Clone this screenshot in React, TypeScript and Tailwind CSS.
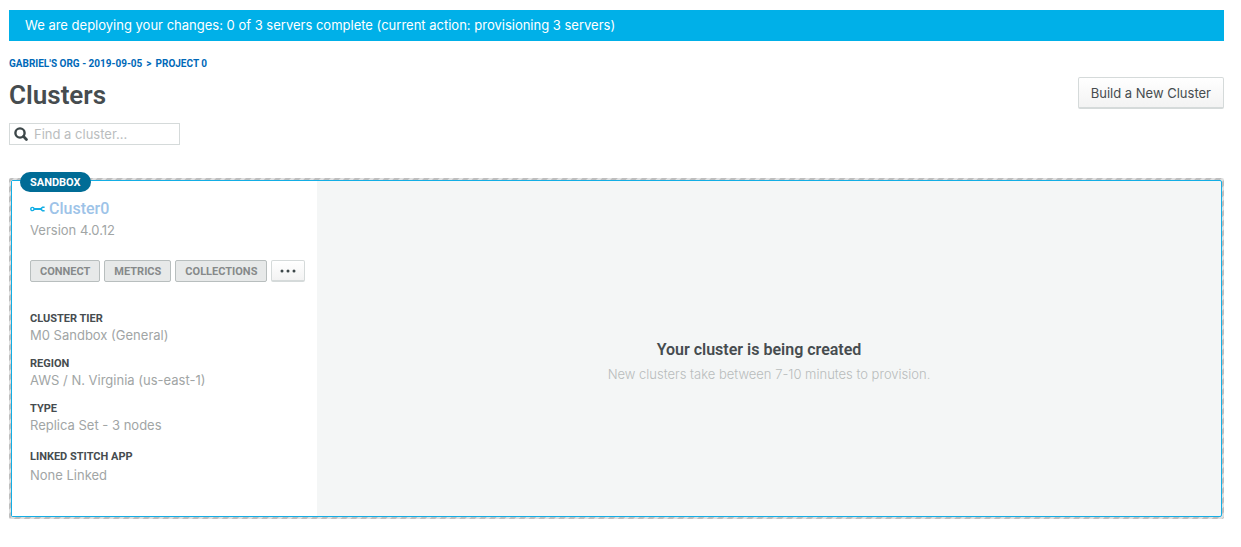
import { useState } from 'react';

const actions = ['Connect', 'Metrics', 'Collections'];

const details = [
  { label: 'Cluster Tier', value: 'M0 Sandbox (General)' },
  { label: 'Region', value: 'AWS / N. Virginia (us-east-1)' },
  { label: 'Type', value: 'Replica Set - 3 nodes' },
];

function SearchIcon() {
  return (
    <svg viewBox="0 0 14 14" className="w-3.5 h-3.5 shrink-0" fill="none" stroke="#3d4749" aria-hidden="true">
      <circle cx="6" cy="6" r="4.6" strokeWidth="2.4" />
      <path d="M9.6 9.6 L12.4 12.4" strokeWidth="2.8" strokeLinecap="round" />
    </svg>
  );
}

function WrenchIcon() {
  return (
    <svg viewBox="0 0 15 6" className="w-[15px] h-1.5 shrink-0" fill="none" stroke="#13aee5" aria-hidden="true">
      <circle cx="2.4" cy="3" r="1.6" strokeWidth="1.4" />
      <path d="M4 3 H11" strokeWidth="2" />
      <path d="M14.6 1.2 H12.6 L11.3 2.4 V3.6 L12.6 4.8 H14.6" strokeWidth="1.5" />
    </svg>
  );
}

function ClusterSummary() {
  return (
    <section className="w-[305px] shrink-0 bg-white pl-[18px] pt-5 pb-8">
      <h2 className="flex items-center gap-1 text-base leading-4 font-medium text-[#9dc3e8]">
        <WrenchIcon />
        <a href="#cluster0">Cluster0</a>
      </h2>
      <p className="mt-1 font-[Inter,sans-serif] text-[13px] leading-[18px] text-[#a1a5a5]">Version 4.0.12</p>

      <div className="mt-[21px] flex gap-1">
        {actions.map((action) => (
          <button
            key={action}
            disabled
            className="h-[22px] px-[9px] pt-0.5 rounded-xs border border-[#b8bebe] bg-[#e7e9e9] text-[11px] leading-4 font-bold uppercase text-[#86898a]"
          >
            {action}
          </button>
        ))}
        <button
          aria-label="More actions"
          className="flex h-[22px] w-[34px] items-center justify-center rounded-xs border border-b-2 border-[#d5dada] bg-linear-to-b from-white to-[#f3f3f3]"
        >
          <svg viewBox="0 0 16 4" className="w-4 h-1" fill="#3d4749" aria-hidden="true">
            <circle cx="2" cy="2" r="1.5" />
            <circle cx="8" cy="2" r="1.5" />
            <circle cx="14" cy="2" r="1.5" />
          </svg>
        </button>
      </div>

      <dl className="mt-[29px] text-[13px] leading-[18px] text-[#a1a5a5]">
        {details.map((item) => (
          <div key={item.label} className="mb-3">
            <dt className="text-[11px] leading-[15px] font-bold uppercase text-[#464c4f]">{item.label}</dt>
            <dd className="font-[Inter,sans-serif]">{item.value}</dd>
          </div>
        ))}
        <div className="pt-[3px]">
          <dt className="mb-0.5 text-[11px] leading-[15px] font-bold uppercase text-[#464c4f]">Linked Stitch App</dt>
          <dd className="font-[Inter,sans-serif]">None Linked</dd>
        </div>
      </dl>
    </section>
  );
}

export default function App() {
  const [query, setQuery] = useState('');

  return (
    <div className="min-h-screen bg-white pt-2.5 pl-[9px] pr-[17px] pb-7 font-[Roboto,'Liberation_Sans',Arial,sans-serif] text-[#464c4f]">
      <div role="status" className="bg-[#00b0e8] px-4 pt-1.5 pb-[7px] font-[Inter,sans-serif] text-[13px] leading-[18px] text-white">
        We are deploying your changes: 0 of 3 servers complete (current action: provisioning 3 servers)
      </div>

      <nav className="mt-4 flex gap-1 text-[10px] leading-[14px] font-bold uppercase text-[#0069b8]">
        <a href="#org">Gabriel's Org - 2019-09-05</a>
        <span>&gt;</span>
        <a href="#project">Project 0</a>
      </nav>

      <header className="mt-1.5 flex items-start justify-between">
        <h1 className="pt-0.5 text-[26px] leading-8 font-semibold">Clusters</h1>
        <button className="h-8 px-3 rounded-xs border border-b-2 border-[#d5dada] bg-linear-to-b from-white to-[#f3f3f3] font-[Inter,sans-serif] text-[13px] leading-[18px]">
          Build a New Cluster
        </button>
      </header>

      <label className="mt-3 flex h-[22px] w-[171px] items-center gap-1.5 border border-[#d5dada] px-1">
        <SearchIcon />
        <input
          type="text"
          aria-label="Find a cluster"
          placeholder="Find a cluster..."
          value={query}
          onChange={(e) => setQuery(e.target.value)}
          className="min-w-0 flex-1 font-[Inter,sans-serif] text-[13px] leading-[18px] outline-none placeholder:text-[#babdbe]"
        />
      </label>

      {/* Striped frame while the cluster is provisioning */}
      <div className="relative mt-[33px] rounded-xs bg-[repeating-linear-gradient(135deg,#bebebe_0px,#bebebe_3px,#e0e0e0_4px,#e0e0e0_6px,#bebebe_7px)] p-0.5">
        <span className="absolute -top-1.5 left-[11px] rounded-full bg-[#006c96] px-2.5 pt-px text-[11px] leading-[19px] font-bold uppercase text-white">
          Sandbox
        </span>
        <div className="flex rounded-xs border border-[#13aee5] bg-[#f4f6f6]">
          <ClusterSummary />
          <div className="flex flex-1 flex-col items-center justify-center pt-[27px] text-center">
            <h3 className="pr-5 text-base leading-5 font-semibold">Your cluster is being created</h3>
            <p className="mt-[5px] mb-0.5 font-[Inter,sans-serif] text-[13px] leading-[18px] font-light text-[#b8bcbc]">
              New clusters take between 7-10 minutes to provision.
            </p>
          </div>
        </div>
      </div>
    </div>
  );
}
